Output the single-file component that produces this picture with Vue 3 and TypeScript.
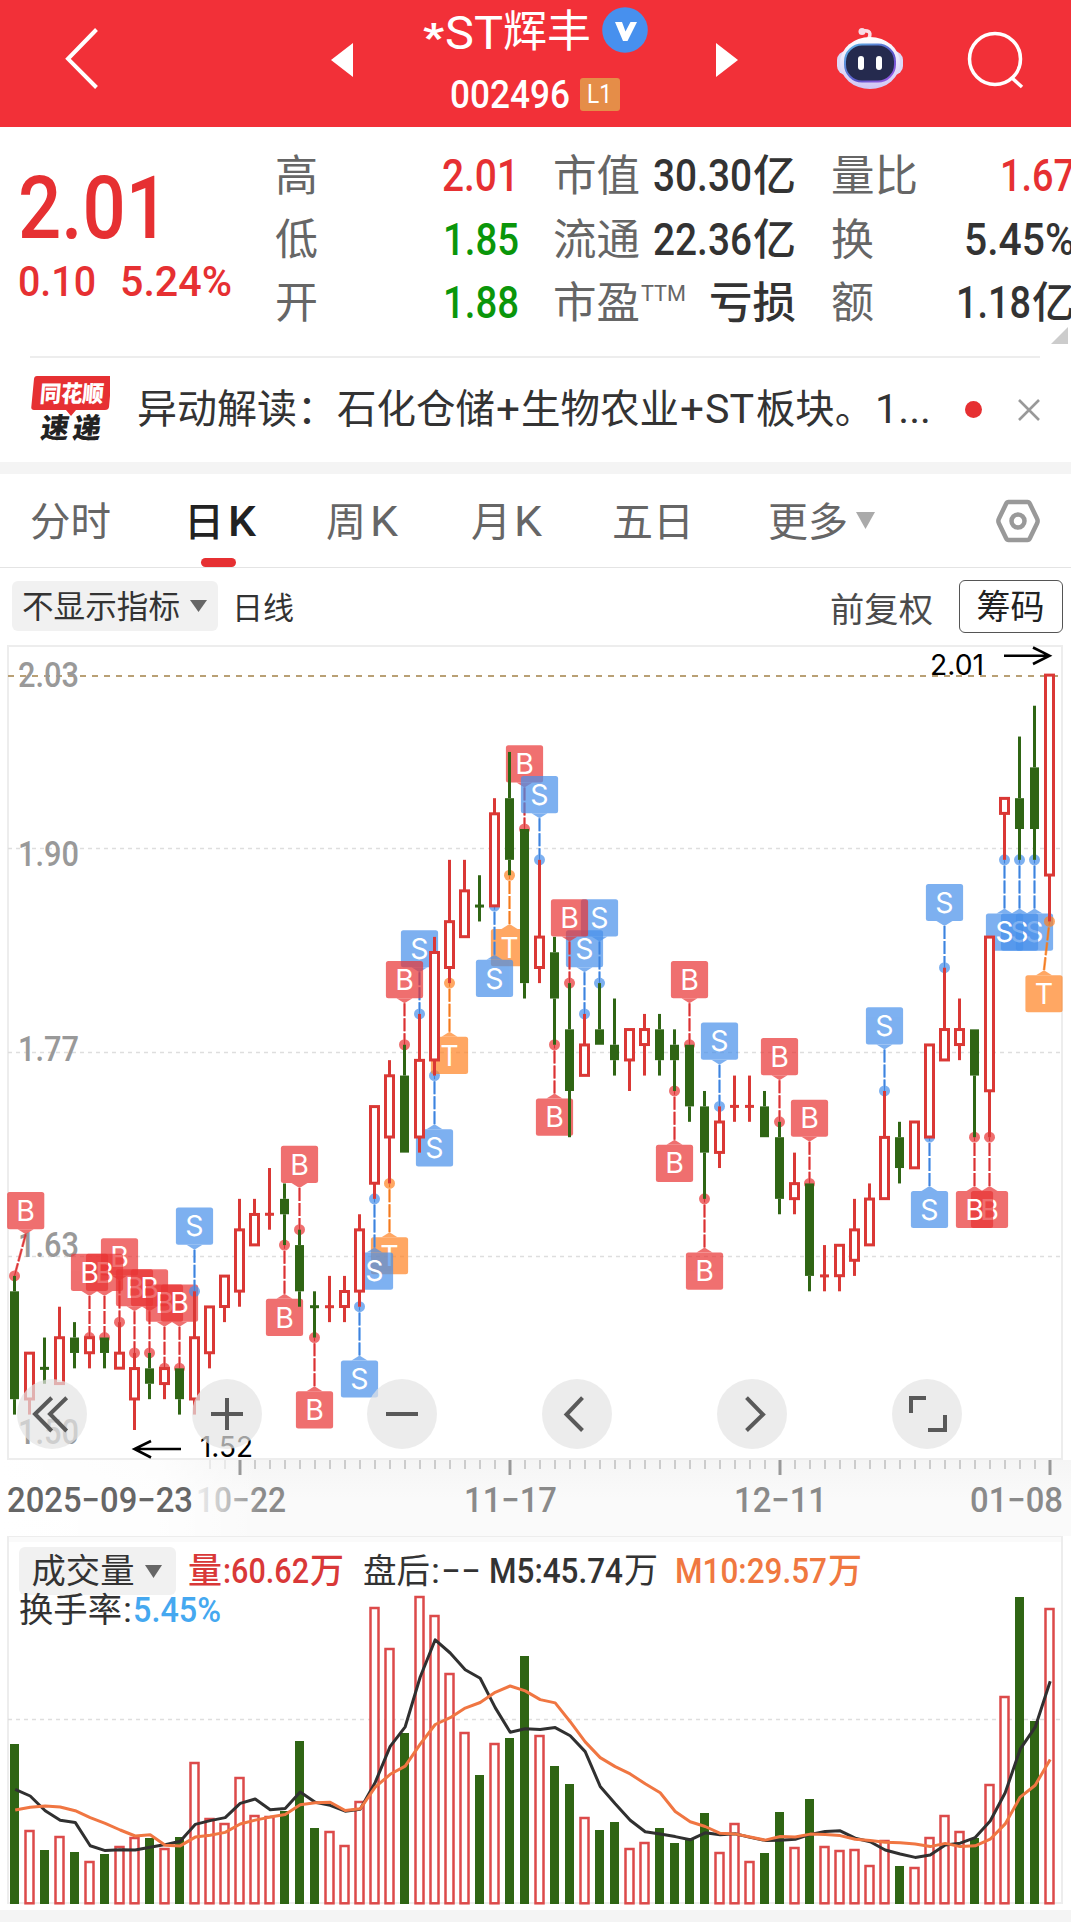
<script setup lang="ts">
import { h, type FunctionalComponent } from 'vue'

// text, x, fitted width, font size, colour, weight, baseline override, extra attributes
type Run = [string, number, number, number, string?, number?, number?, Record<string, string>?]

const FONT = '"Roboto", "Noto Sans CJK SC", sans-serif'

// A line of text whose runs are fitted to exact widths
const Runs: FunctionalComponent<{ r: Run[]; ht: number; y: number }> = (p) =>
  h(
    'svg',
    { height: p.ht, width: '100%', 'font-family': FONT, style: 'display:block;overflow:visible' },
    p.r.map(([t, x, w, s, c, wt, y, extra]) =>
      h(
        'text',
        {
          x,
          y: y ?? p.y,
          textLength: w,
          lengthAdjust: 'spacingAndGlyphs',
          'font-size': s,
          fill: c ?? '#333',
          'font-weight': wt ?? 400,
          ...extra,
        },
        t,
      ),
    ),
  )
Runs.props = ['r', 'ht', 'y']

const RED = '#e63032'
const GREEN = '#0a960a'
const GREY = '#666'

const quotes: Run[][][] = [
  [
    [['高', 13, 43, 43, GREY], ['2.01', 180, 77, 44, RED, 500]],
    [['低', 13, 43, 43, GREY], ['1.85', 181, 76, 44, GREEN, 500]],
    [['开', 13, 43, 43, GREY], ['1.88', 181, 76, 44, GREEN, 500]],
  ],
  [
    [['市值', 11, 87, 43, GREY], ['30.30', 111, 99, 44, '#333', 500], ['亿', 211, 43, 43, '#333', 500]],
    [['流通', 11, 87, 43, GREY], ['22.36', 111, 99, 44, '#333', 500], ['亿', 211, 43, 43, '#333', 500]],
    [['市盈', 11, 87, 43, GREY], ['TTM', 99, 45, 22, GREY, 400, 47], ['亏损', 167, 87, 43, '#333', 500]],
  ],
  [
    [['量比', 9, 87, 43, GREY], ['1.67', 178, 75, 44, RED, 500]],
    [['换', 9, 43, 43, GREY], ['5.45%', 142, 111, 44, '#333', 500]],
    [['额', 9, 43, 43, GREY], ['1.18', 134, 75, 44, '#333', 500], ['亿', 210, 43, 43, '#333', 500]],
  ],
]

const tabs: { w: number; on?: boolean; r: Run[] }[] = [
  { w: 154, r: [['分时', 30, 81, 40, GREY]] },
  { w: 136, on: true, r: [['日', 30, 40, 40, '#222', 500], ['K', 74, 28, 42, '#222', 500]] },
  { w: 146, r: [['周', 36, 40, 40, GREY], ['K', 80, 28, 42, GREY]] },
  { w: 145, r: [['月', 35, 40, 40, GREY], ['K', 78, 28, 42, GREY]] },
  { w: 145, r: [['五日', 31, 82, 40, GREY]] },
  { w: 160, r: [['更多', 42, 80, 40, GREY]] },
]

const px = (i: number) => 14.5 + 15 * i
const py = (p: number) => 1430 - (p - 152) * 15.41

// open, close, high, low in cents; an optional flag forces the colour of a doji
const ohlc: number[][] = [
  [161, 154, 162, 153], [154, 157, 157, 153], [156, 156, 158, 155, 1], [155, 158, 160, 155], [158, 157, 159, 156],
  [157, 158, 158, 156], [158, 157, 158, 156], [156, 157, 159, 156], [154, 156, 157, 152], [156, 155, 157, 154],
  [155, 156, 156, 154], [156, 154, 156, 153], [154, 158, 161, 153], [157, 160, 160, 156], [160, 162, 162, 159],
  [161, 165, 167, 160], [164, 166, 167, 164], [166, 166, 169, 165], [167, 166, 168, 164], [164, 161, 165, 160],
  [160, 160, 161, 158, 1], [160, 160, 162, 159], [160, 161, 162, 159], [161, 165, 166, 160], [168, 173, 173, 167],
  [171, 175, 176, 168], [175, 170, 177, 170], [171, 176, 179, 170], [176, 183, 184, 175], [182, 185, 189, 181],
  [184, 187, 189, 184], [186, 186, 188, 185, 1], [186, 192, 193, 186], [193, 189, 196, 188], [191, 181, 191, 180],
  [182, 184, 189, 181], [183, 180, 184, 177], [178, 174, 181, 171], [175, 177, 179, 175], [178, 177, 181, 177],
  [177, 176, 180, 175], [176, 178, 178, 174], [177, 178, 179, 175], [178, 176, 179, 175], [177, 176, 178, 174],
  [177, 173, 177, 172], [173, 170, 174, 167], [170, 172, 173, 169], [173, 173, 175, 172], [173, 173, 175, 172],
  [173, 171, 174, 171], [171, 167, 172, 166], [167, 168, 170, 166], [168, 162, 168, 161], [162, 162, 164, 161],
  [162, 164, 164, 161], [163, 165, 167, 162], [164, 167, 168, 164], [167, 171, 174, 167], [171, 169, 172, 168],
  [169, 172, 172, 169], [171, 177, 177, 171], [176, 178, 182, 176], [177, 178, 180, 176], [178, 175, 178, 171],
  [174, 184, 184, 171], [192, 193, 193, 189], [193, 191, 197, 189], [195, 191, 199, 189], [188, 201, 201, 185],
]
const candles = ohlc.map(([o, c, hi, lo, g], i) => ({
  x: px(i),
  green: o > c || g === 1,
  doji: o === c,
  top: py(Math.max(o, c)),
  bot: py(Math.min(o, c)),
  hi: py(hi),
  lo: py(lo),
}))

const up = 1
const dn = -1
const markList: [number, 'B' | 'S' | 'T', number, number?][] = [
  [0, 'B', up, 25.7], [7, 'B', up], [6, 'B', up], [5, 'B', up], [8, 'B', up], [9, 'B', up], [10, 'B', up], [11, 'B', up],
  [12, 'S', up], [18, 'B', dn], [19, 'B', up], [20, 'B', dn], [23, 'S', dn], [25, 'T', dn], [24, 'S', dn],
  [27, 'S', up], [26, 'B', up], [28, 'S', dn], [29, 'T', dn], [33, 'T', dn], [32, 'S', dn], [34, 'B', up], [35, 'S', up],
  [38, 'S', up], [39, 'S', up], [37, 'B', up], [36, 'B', dn], [44, 'B', dn], [45, 'B', up], [46, 'B', dn], [47, 'S', up],
  [51, 'B', up], [53, 'B', up], [58, 'S', up], [62, 'S', up], [61, 'S', dn], [65, 'B', dn], [64, 'B', dn],
  [68, 'S', dn], [67, 'S', dn], [66, 'S', dn], [69, 'T', dn, 1044],
]
const tones = {
  B: ['#e93333', '#d63336'],
  S: ['#4790eb', '#3f83dc'],
  T: ['#ff8222', '#ef7a20'],
}
const marks = markList.map(([i, t, d, lx]) => {
  const x = lx ?? px(i)
  const dot = d === up ? candles[i].hi : candles[i].lo
  const y = d === up ? dot - 65.2 : dot + 72.3
  const edge = y + d * 18.6
  return { t, x, y, dx: px(i), dot, tip: edge + d * 5, edge, fill: tones[t][0], line: tones[t][1] }
})

const volTop = [
  492, 750, 810, 768, 816, 843, 822, 798, 771, 774, 804, 771, 546, 714, 729, 591, 705, 708, 693, 483, 744, 753, 795, 663,
  81, 204, 459, 48, 105, 279, 456, 585, 489, 474, 228, 465, 558, 612, 711, 750, 726, 804, 786, 744, 789, 774, 699, 816,
  729, 843, 819, 696, 801, 657, 798, 810, 807, 855, 780, 858, 861, 771, 705, 753, 774, 612, 348, 51, 423, 84,
]
const vols = volTop.map((v, i) => ({ x: px(i), y: 1580 + v / 3, green: candles[i].green }))
const avgLine = (n: number, seed: number[]) =>
  volTop
    .map((_, i) => {
      const v = i < n - 1 ? seed[i] : volTop.slice(i - n + 1, i + 1).reduce((a, b) => a + b, 0) / n
      return `${px(i) + 0.7},${(1580 + v / 3).toFixed(1)}`
    })
    .join(' ')
const ma5 = avgLine(5, [628, 648, 692, 721])
const ma10 = avgLine(10, [690, 682, 678, 681, 692, 713, 730, 750, 768])

const ticks = Array.from({ length: 57 }, (_, k) => k + 13).map((i) => ({
  x: px(i) + 0.5,
  major: (i - 15) % 18 === 0,
  o: i < 15 ? 0.35 : 1,
}))

const axis: [string, number, number][] = [
  ['2.03', 687, 18], ['1.90', 866, 18], ['1.77', 1061, 18], ['1.63', 1257, 18], ['1.50', 1443.5, 18],
]

const controls = [
  'M34.7 18.7 18 35 34.7 52M49.7 18.7 33 35 49.7 52',
  'M19 35H51M35 19V51',
  'M19 35H51',
  'M40.5 18.7 24.5 35.5 40.5 51.5',
  'M29.5 18.7 46 35.5 29.5 51.5',
  'M34 19H19V34M53 36V51H36',
]
</script>

<template>
  <div class="page">
    <header class="top">
      <svg class="back" width="180" height="127"><path d="M96.500 29.500 68 58.800 96.500 87.500" /></svg>
      <svg class="arrow prev" width="22" height="34"><path d="M22 0V34L0 17Z" /></svg>
      <div class="title">
        <Runs
          :ht="68"
          :y="48.500"
          :r="[['*', 20, 21, 38, '#fff', 900, 51], ['ST', 42, 58, 47, '#fff'], ['辉丰', 100, 88, 44, '#fff', 400, 46.5]]"
        />
        <svg class="verified" width="46" height="46">
          <circle cx="23" cy="23" r="22.800" />
          <path d="M13 15h7l3.500 9.500L28.500 15H35L25.500 34H21Z" />
        </svg>
        <div class="code">
          <Runs :ht="40" :y="39.500" :r="[['002496', 47, 120, 38, '#fff', 500]]" />
          <span class="level"><Runs :ht="32" :y="25" :r="[['L1', 7, 25, 26, '#fff']]" /></span>
        </div>
      </div>
      <svg class="arrow next" width="22" height="34"><path d="M0 0V34L22 17Z" /></svg>
      <svg class="robot" width="68" height="66" viewBox="836 25 68 66">
        <defs>
          <linearGradient id="shell" x1="0" y1="0" x2="0" y2="1">
            <stop offset="0" stop-color="#fff" /><stop offset="1" stop-color="#cfc6f5" />
          </linearGradient>
          <linearGradient id="rim" x1="0" y1="0" x2="1" y2="1">
            <stop offset="0" stop-color="#5fb8e8" /><stop offset="0.6" stop-color="#5a55c8" /><stop offset="1" stop-color="#a45be8" />
          </linearGradient>
        </defs>
        <path d="M869 38C872 31 867 30 862 31" fill="none" stroke="#fbdfe6" stroke-width="3.500" stroke-linecap="round" />
        <circle cx="862" cy="31.500" r="3.500" fill="#f7dbe6" />
        <rect x="837" y="51" width="66" height="24" rx="9" fill="#dcd8f6" />
        <ellipse cx="870" cy="63" rx="30" ry="26" fill="url(#shell)" />
        <rect x="845" y="44.500" width="50" height="37" rx="17" fill="#252a4e" stroke="url(#rim)" stroke-width="2" />
        <rect x="858" y="56" width="6" height="14" rx="3" fill="#fff" />
        <rect x="876" y="56" width="6" height="14" rx="3" fill="#fff" />
      </svg>
      <svg class="search" width="60" height="60"><circle cx="28" cy="29" r="25.500" /><path d="M45 48 55 57" /></svg>
    </header>

    <section class="quote">
      <div class="price">
        <Runs
          :ht="229"
          :y="110.500"
          :r="[['2.01', 18, 151, 87, RED, 500], ['0.10', 18, 78, 43, RED, 500, 169], ['5.24%', 120, 112, 43, RED, 500, 169]]"
        />
      </div>
      <div v-for="(col, ci) in quotes" :key="ci" class="col">
        <Runs v-for="(row, ri) in col" :key="ri" :ht="63.500" :y="63.500" :r="row" />
      </div>
      <svg class="corner" width="17" height="17"><path d="M17 0V17H0Z" /></svg>
    </section>

    <section class="news">
      <svg class="badge" width="110" height="104" :font-family="'Roboto, Noto Sans CJK SC, sans-serif'">
        <path d="M37 18H109Q112 18 111.500 21L109 49Q108.500 52 105 52H76L71 58 66 52H34Q31 52 31.300 49L34 21Q34.300 18 37 18Z" fill="#e63032" />
        <text x="39" y="44" textLength="64" lengthAdjust="spacingAndGlyphs" font-size="23" font-weight="900" fill="#fff" transform="translate(4 0) skewX(-5)">同花顺</text>
        <text x="41" y="80" textLength="60" lengthAdjust="spacing" font-size="28" font-weight="900" fill="#222" transform="translate(10 0) skewX(-8)">速递</text>
      </svg>
      <div class="headline">
        <Runs
          :ht="104"
          :y="65"
          :r="[
            ['异动解读：', 27, 200, 40], ['石化仓储', 227, 158, 40], ['+', 386, 24, 40], ['生物农业', 411, 158, 40],
            ['+', 570, 24, 40], ['ST', 595, 49, 41], ['板块。', 646, 118, 40], ['1...', 765, 56, 40],
          ]"
        />
      </div>
      <i class="dot"></i>
      <svg class="close" width="22" height="22"><path d="M1 1 21 21M21 1 1 21" /></svg>
    </section>
    <div class="band"></div>

    <nav class="tabs">
      <div v-for="(t, i) in tabs" :key="i" class="tab" :class="{ on: t.on }" :style="{ width: t.w + 'px' }">
        <Runs :ht="93" :y="61.500" :r="t.r" />
      </div>
      <svg class="more" width="19" height="17"><path d="M0 0H19L9.500 17Z" /></svg>
      <svg class="settings" width="46" height="44">
        <path d="M13.500 3H32.500Q34 3 35 5L42 19.500Q43.300 22 42 24.500L35 39Q34 41 32.500 41H13.500Q12 41 11 39L4 24.500Q2.700 22 4 19.500L11 5Q12 3 13.500 3Z" />
        <circle cx="23" cy="22" r="6.500" />
      </svg>
    </nav>

    <div class="toolbar">
      <div class="pick">
        <Runs :ht="50" :y="37" :r="[['不显示指标', 10, 158, 31.500]]" />
        <svg width="17" height="12"><path d="M0 0H17L8.500 12Z" fill="#666" /></svg>
      </div>
      <div class="period"><Runs :ht="50" :y="38.500" :r="[['日线', 14, 62, 31]]" /></div>
      <div class="adjust"><Runs :ht="50" :y="42" :r="[['前复权', -1, 103, 34.500, '#4b4b4b']]" /></div>
      <div class="chips"><Runs :ht="50" :y="37.500" :r="[['筹码', 16.500, 68, 34, '#222']]" /></div>
    </div>

    <section class="kline">
      <svg width="1071" height="896" viewBox="0 640 1071 896" font-family="Roboto, sans-serif">
        <defs>
          <linearGradient id="haze" x1="0" y1="0" x2="0" y2="1">
            <stop offset="0" stop-color="#f5f5f5" /><stop offset="0.5" stop-color="#fafafa" /><stop offset="1" stop-color="#fafafa" />
          </linearGradient>
          <linearGradient id="veil"><stop offset="0" stop-color="#fff" /><stop offset="0.6" stop-color="#fff" stop-opacity="0.8" /><stop offset="1" stop-color="#fff" stop-opacity="0" /></linearGradient>
          <linearGradient id="fade" x1="198" x2="262" gradientUnits="userSpaceOnUse">
            <stop offset="0" stop-color="#eee" /><stop offset="0.500" stop-color="#bbb" /><stop offset="1" stop-color="#8a8a8a" />
          </linearGradient>
        </defs>
        <rect x="0" y="1460" width="1071" height="76" fill="url(#haze)" />
        <rect x="0" y="1460" width="260" height="76" fill="url(#veil)" />
        <rect x="8" y="646" width="1054" height="813" fill="#fff" stroke="#ededed" stroke-width="2" />
        <path d="M8 848.500H1062M8 1052.500H1062M8 1256.500H1062" stroke="#dedede" stroke-width="1.300" stroke-dasharray="4 4" fill="none" />
        <path d="M8 676H1058" stroke="#b9a075" stroke-width="2" stroke-dasharray="6 6" />
        <text v-for="a in axis" :key="a[0]" :x="a[2]" :y="a[1]" textLength="61" lengthAdjust="spacingAndGlyphs" font-size="34.500" font-weight="500" fill="#999">{{ a[0] }}</text>

        <g v-for="(m, k) in marks" :key="'m' + k">
          <g :opacity="0.7" :fill="m.fill">
            <rect :x="m.x - 18.600" :y="m.y - 18.600" width="37.200" height="37.200" rx="2.500" />
            <path :d="`M${m.x - 8} ${m.edge}H${m.x + 8}L${m.x} ${m.tip}Z`" />
            <circle :cx="m.dx" :cy="m.dot" r="5.500" />
            <path :d="`M${m.x} ${m.tip}L${m.dx} ${m.dot}`" :stroke="m.fill" stroke-width="2.600" stroke-dasharray="13 2" />
          </g>
          <path :d="`M${m.x} ${m.tip}L${m.dx} ${m.dot}`" :stroke="m.line" stroke-width="1.200" stroke-dasharray="13 2" />
          <text :x="m.x" :y="m.y + 10.200" text-anchor="middle" font-size="28.500" fill="#fff" font-family="Inter, sans-serif">{{ m.t }}</text>
        </g>

        <g v-for="(c, k) in candles" :key="'c' + k" :fill="c.green ? '#2f6514' : '#da3835'">
          <rect :x="c.x - 1.500" :y="c.hi" width="3" :height="c.top - c.hi" />
          <rect :x="c.x - 1.500" :y="c.bot" width="3" :height="c.lo - c.bot" />
          <rect v-if="c.doji" :x="c.x - 4.500" :y="c.top - 1.500" width="9" height="3" />
          <rect v-else-if="c.green" :x="c.x - 4.500" :y="c.top" width="9" :height="c.bot - c.top" />
          <rect v-else :x="c.x - 4" :y="c.top + 0.200" width="8" :height="c.bot - c.top - 0.400" fill="#fff" stroke="#da3835" stroke-width="3" />
        </g>

        <g fill="none" stroke="#000" stroke-width="2.600">
          <path d="M1004 655.700H1049M1033 647.500 1049.500 655.700 1033 664" />
          <path d="M181 1449H135M151 1441 134.500 1449 151 1457.500" />
        </g>
        <text x="930" y="675" textLength="54" lengthAdjust="spacingAndGlyphs" font-size="29" font-family="Inter, sans-serif">2.01</text>
        <text x="200" y="1457" textLength="53" lengthAdjust="spacingAndGlyphs" font-size="29" font-family="Inter, sans-serif">1.52</text>

        <rect v-for="t in ticks" :key="t.x" :x="t.x - (t.major ? 1.500 : 1)" y="1460" :width="t.major ? 3 : 2" :height="t.major ? 15 : 9" :fill="t.major ? '#999' : '#ccc'" :opacity="t.o" />
        <g font-size="35" font-weight="500" fill="#8a8a8a">
          <text x="7" y="1512" textLength="186" lengthAdjust="spacingAndGlyphs" fill="#666">2025−09−23</text>
          <text x="196" y="1512" textLength="90" lengthAdjust="spacingAndGlyphs" fill="url(#fade)">10−22</text>
          <text x="464" y="1512" textLength="93" lengthAdjust="spacingAndGlyphs">11−17</text>
          <text x="734" y="1512" textLength="93" lengthAdjust="spacingAndGlyphs">12−11</text>
          <text x="970" y="1512" textLength="93" lengthAdjust="spacingAndGlyphs">01−08</text>
        </g>
      </svg>
      <div class="controls">
        <button v-for="(d, k) in controls" :key="k"><svg width="70" height="70"><path :d="d" /></svg></button>
      </div>
    </section>

    <section class="volume">
      <svg class="bars" width="1071" height="374" viewBox="0 1536 1071 374">
        <rect x="8" y="1536" width="1054" height="367" fill="#fff" stroke="#ededed" stroke-width="2" />
        <rect x="9" y="1537" width="1052" height="5" fill="#fafafa" />
        <path d="M8 1719.500H1060" stroke="#dedede" stroke-width="1.300" stroke-dasharray="4 4" />
        <template v-for="(v, k) in vols" :key="k">
          <rect v-if="v.green" :x="v.x - 4.500" :y="v.y" width="9" :height="1904 - v.y" fill="#2f6514" />
          <rect v-else :x="v.x - 4" :y="v.y + 1" width="8" :height="1903.300 - v.y - 1" fill="#fff" stroke="#dc4a4a" stroke-width="2.500" />
        </template>
        <g fill="none" stroke-width="3" stroke-linejoin="round">
          <polyline :points="ma5" stroke="#303030" />
          <polyline :points="ma10" stroke="#f07642" />
        </g>
      </svg>
      <div class="stats">
        <div class="pick vol">
          <Runs :ht="47" :y="35" :r="[['成交量', 12.500, 103, 34.500]]" />
          <svg width="17" height="13"><path d="M0 0H17L8.500 13Z" fill="#666" /></svg>
        </div>
        <Runs
          :ht="47"
          :y="36.500"
          :r="[
            ['量', 12, 34, 35, '#d93838', 500], [':60.62', 47, 86, 35.500, '#d93838', 500], ['万', 134, 34, 35, '#d93838', 500],
            ['盘后', 187, 67, 34.500], [':', 255, 9, 35], ['−−', 265, 40, 35], ['M5:45.74', 313, 134, 35.500, '#333', 500],
            ['万', 448, 34, 35], ['M10:29.57', 499, 152, 35.500, '#f07840', 500], ['万', 652, 34, 35, '#f07840', 500],
          ]"
        />
      </div>
      <div class="turnover">
        <Runs :ht="30" :y="27" :r="[['换手率', 19, 103, 34.500], [':', 123, 9, 35], ['5.45%', 133, 88, 35.500, '#45a8f0', 500]]" />
      </div>
    </section>
    <div class="band"></div>
  </div>
</template>

<style>
body {
  background: #fff;
}
</style>

<style scoped>
.page {
  width: 1071px;
  height: 1928px;
  overflow: hidden;
  background: #fff;
  font-family: 'Roboto', 'Noto Sans CJK SC', sans-serif;
}
.page svg {
  display: block;
  flex: none;
}
.top {
  display: flex;
  height: 127px;
  background: #f23038;
}
.back {
  fill: none;
  stroke: #fff;
  stroke-width: 4;
}
.arrow {
  fill: #fff;
  margin-top: 43px;
}
.prev {
  margin-left: 151px;
}
.title {
  position: relative;
  width: 312px;
  margin-left: 50px;
}
.verified {
  position: absolute;
  left: 198.5px;
  top: 7px;
  fill: #4790ee;
}
.verified path {
  fill: #fff;
}
.code {
  display: flex;
  width: 240px;
}
.code > svg {
  width: 177px;
}
.level {
  flex: none;
  width: 40px;
  height: 33px;
  margin: 10px 0 0;
  border-radius: 3px;
  background: #e58d48;
}
.next {
  margin-left: 1px;
}
.robot {
  margin: 25px 0 0 98px;
}
.search {
  margin: 30px 0 0 63px;
  fill: none;
  stroke: #fff;
  stroke-width: 3.5;
}
.quote {
  position: relative;
  display: grid;
  grid-template-columns: 262px 280px 280px 249px;
  height: 229px;
}
.corner {
  position: absolute;
  right: 3px;
  bottom: 12px;
  fill: #ccc;
}
.news {
  display: flex;
  align-items: center;
  height: 104px;
  border-top: 2px solid transparent;
  background: linear-gradient(#ededed, #ededed) 30px 0 / 1010px 2px no-repeat;
  background-origin: border-box;
}
.headline {
  width: 853px;
}
.dot {
  width: 17px;
  height: 17px;
  margin-top: -1px;
  margin-left: 2px;
  border-radius: 50%;
  background: #e63032;
}
.close {
  margin-left: 36px;
  stroke: #999;
  stroke-width: 2.6;
}
.band {
  height: 12px;
  background: #f4f4f4;
}
.tabs {
  display: flex;
  height: 93px;
  border-bottom: 1px solid #e4e4e4;
}
.tab {
  position: relative;
  flex: none;
}
.tab.on::after {
  content: '';
  position: absolute;
  left: 47px;
  bottom: 0;
  width: 35px;
  height: 9px;
  border-radius: 5px;
  background: #e63032;
}
.more {
  margin: 38px 0 0 -30px;
  fill: #aaa;
}
.settings {
  margin: 25px 0 0 120px;
  fill: none;
  stroke: #999;
  stroke-width: 4.5;
}
.toolbar {
  display: flex;
  height: 72px;
  padding: 12px 8px 0 12px;
  box-sizing: border-box;
}
.pick {
  display: flex;
  align-items: center;
  width: 206px;
  height: 50px;
  margin-top: 1px;
  border-radius: 6px;
  background: #f1f1f1;
}
.pick > svg:first-child {
  width: 178px;
}
.adjust {
  width: 128px;
  margin-left: auto;
}
.chips {
  width: 102px;
  height: 51px;
  border: 1.5px solid #555;
  border-radius: 6px;
}
.kline {
  position: relative;
  height: 896px;
}
.controls {
  position: absolute;
  left: 17px;
  top: 739px;
  display: flex;
  gap: 105px;
}
.controls button {
  width: 70px;
  height: 70px;
  padding: 0;
  border: 0;
  border-radius: 50%;
  background: rgba(228, 228, 228, 0.7);
}
.controls path {
  fill: none;
  stroke: #595959;
  stroke-width: 4;
}
.volume {
  position: relative;
  height: 374px;
}
.bars {
  position: absolute;
  left: 0;
  top: 0;
}
.stats {
  position: relative;
  display: flex;
  padding: 10px 0 0 19px;
}
.pick.vol {
  flex: none;
  width: 157px;
  height: 48px;
}
.pick.vol > svg:first-child {
  width: 126px;
}
.turnover {
  position: relative;
}
</style>
